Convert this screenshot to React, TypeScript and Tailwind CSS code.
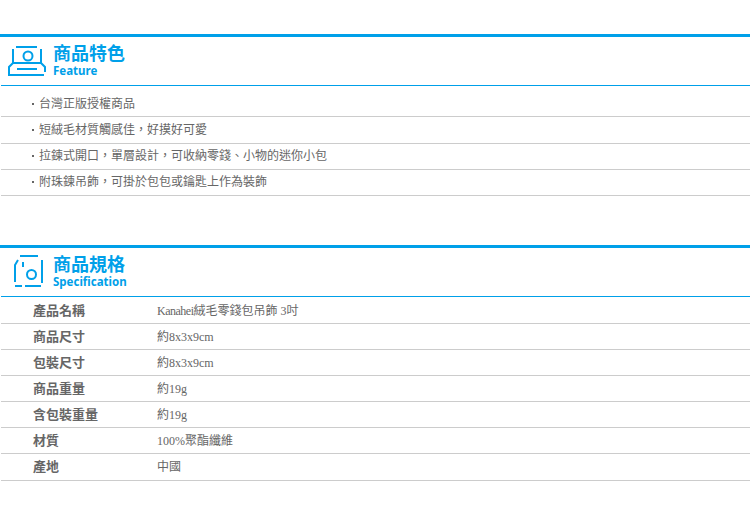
const blue = "#00a0e9";

const features = [
  "台灣正版授權商品",
  "短絨毛材質觸感佳，好摸好可愛",
  "拉鍊式開口，單層設計，可收納零錢、小物的迷你小包",
  "附珠鍊吊飾，可掛於包包或鑰匙上作為裝飾",
];

const specs: [string, React.ReactNode][] = [
  ["產品名稱", <><span className="tracking-[-0.5px]">Kanahei</span>絨毛零錢包吊飾 3吋</>],
  ["商品尺寸", "約8x3x9cm"],
  ["包裝尺寸", "約8x3x9cm"],
  ["商品重量", "約19g"],
  ["含包裝重量", "約19g"],
  ["材質", "100%聚酯纖維"],
  ["產地", "中國"],
];

function FeatureIcon() {
  return (
    <svg width="38" height="34" viewBox="8 44 38 34" fill="none" stroke={blue} strokeWidth="2">
      <path d="M16 47H37" />
      <path d="M13 49V63H41V49" />
      <path d="M13 63L9 67V75H44" />
      <path d="M41 63L45 67V72" />
      <path d="M17 69H37" />
      <circle cx="28" cy="56" r="4.5" />
    </svg>
  );
}

function SpecIcon() {
  return (
    <svg width="38" height="34" viewBox="8 255 38 34" fill="none" stroke={blue} strokeWidth="2">
      <path d="M20 256H38" />
      <path d="M42 260V283" />
      <path d="M18 260L15 265V282" />
      <path d="M23 262V267" />
      <path d="M15 286H22" />
      <path d="M25 286H41" />
      <circle cx="31.5" cy="274.5" r="4.5" />
    </svg>
  );
}

function SectionHead({ title, sub, icon }: { title: string; sub: string; icon: React.ReactNode }) {
  return (
    <div className="border-t-[3px] border-[#00a0e9]">
      <div className="flex h-[49px] items-center border-b border-[#00a0e9] ml-px">
        <div className="w-[52px] pl-[7px] flex">{icon}</div>
        <div
          className="text-[#00a0e9] font-bold"
          style={{ fontFamily: '"Noto Sans", "Noto Sans CJK TC", sans-serif' }}
        >
          <div className="text-[18px] leading-[20px]">{title}</div>
          <div className="text-[11.5px] leading-[16px]">{sub}</div>
        </div>
      </div>
    </div>
  );
}

export default function App() {
  return (
    <div
      className="w-[750px] h-[524px] bg-white overflow-hidden pt-[34px] text-[#666] text-[12px]"
      style={{ fontFamily: '"Liberation Serif", "Noto Sans CJK TC", serif' }}
    >
      <SectionHead title="商品特色" sub="Feature" icon={<FeatureIcon />} />
      <ul className="ml-px pt-[5px] mb-[49px]">
        {features.map((t) => (
          <li
            key={t}
            className="h-[26px] nth-2:h-[27px] nth-3:pb-[2px] nth-4:pb-[2px] flex items-center border-b border-[#ccc] pl-[31px]"
          >
            <span className="w-[2px] h-[2px] bg-[#666] mr-[5px]" />
            {t}
          </li>
        ))}
      </ul>
      <SectionHead title="商品規格" sub="Specification" icon={<SpecIcon />} />
      <div className="ml-px">
        {specs.map(([k, v]) => (
          <div
            key={k}
            className="h-[26px] first:h-[27px] first:pt-[2px] last:h-[27px] flex items-center border-b border-[#ccc]"
          >
            <div className="w-[156px] pl-[32px] text-[13px] font-bold">{k}</div>
            <div>{v}</div>
          </div>
        ))}
      </div>
    </div>
  );
}
